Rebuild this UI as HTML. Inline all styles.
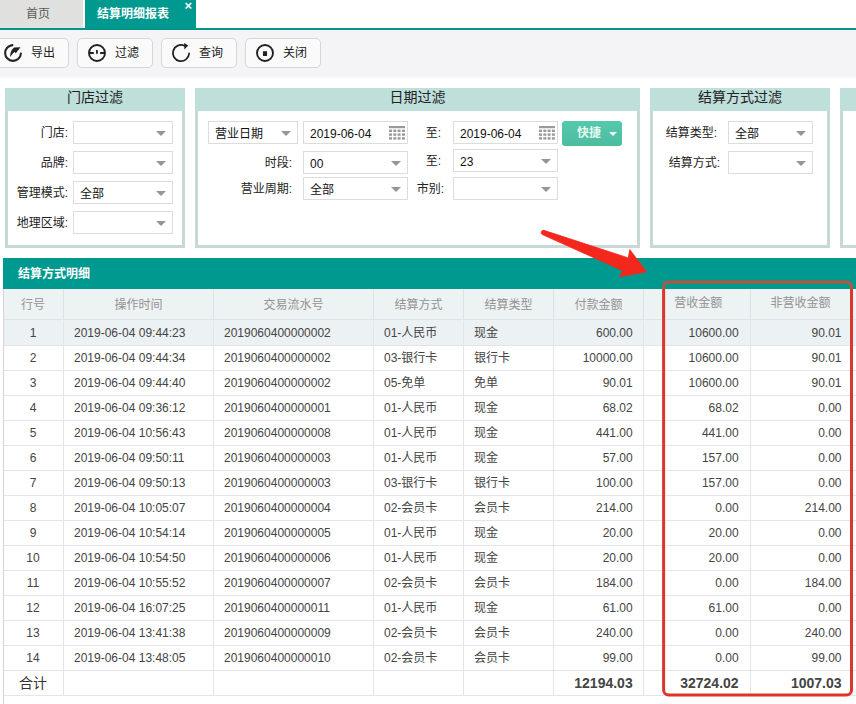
<!DOCTYPE html>
<html lang="zh-CN"><head><meta charset="utf-8"><title>结算明细报表</title>
<style>
*{box-sizing:border-box;margin:0;padding:0}
html,body{width:856px;height:704px;overflow:hidden;background:#fff}
body{position:relative;font-family:"Liberation Sans","Noto Sans CJK SC",sans-serif;font-size:12px;color:#222}
.abs{position:absolute}
/* tabs */
.tab1{position:absolute;left:0;top:0;width:83px;height:28px;background:#e0e0de;color:#5a5a5a;line-height:28px;text-align:center;padding-right:7px}
.tab2{position:absolute;left:85px;top:0;width:111px;height:28px;background:#00998f;color:#fff;font-weight:bold;line-height:28px;padding-left:12px}
.tab2 i{position:absolute;right:4px;top:-4px;font-style:normal;font-size:13px;font-weight:bold;line-height:20px}
.tline{position:absolute;left:0;top:28px;width:856px;height:2px;background:#04948a}
.tbar{position:absolute;left:0;top:30px;width:856px;height:49px;background:linear-gradient(#f4f4f6 0,#f4f4f6 46px,#fff 49px)}
.btn{position:absolute;top:38px;height:30px;width:76px;border:1px solid #d6d6d6;border-radius:5px;background:#fafafa;color:#222;line-height:28px}
.btn span{position:absolute;top:0}
.btn svg{position:absolute}
/* panels */
.panel{position:absolute;top:88px;height:160px;border:3px solid #c6d9d6;background:#fff}
.panel .ph{position:absolute;left:-3px;right:-3px;top:-3px;height:23px;background:#bfdfdb;text-align:center;font-size:14px;line-height:19px;color:#222}
.lab{position:absolute;height:23px;line-height:25px;text-align:right;white-space:nowrap;color:#222}
.sel{position:absolute;height:23px;border:1px solid #dcdcdc;background:#fff;line-height:24px;padding-left:6px;white-space:nowrap;color:#111}
.sel:after{content:"";position:absolute;right:6px;top:9px;border-left:5px solid transparent;border-right:5px solid transparent;border-top:5px solid #969696}
.sel.date:after{display:none}
.sel.date svg{position:absolute;right:2.5px;top:4px}
.qbtn{position:absolute;background:linear-gradient(#55c9ad,#4dbc9f);border-radius:3px;color:#e6f7f1;font-weight:bold;line-height:25px;padding-left:15px}
.qbtn:after{content:"";position:absolute;right:5.5px;top:10.5px;border-left:4px solid transparent;border-right:4px solid transparent;border-top:4.5px solid #f2fbf8}
/* grid */
.grid{position:absolute;left:3px;top:258px;width:853px;height:446px;background:#fff}
.gtitle{position:absolute;left:0;top:0;width:853px;height:31px;background:#00998f;color:#fff;font-weight:bold;line-height:33px;padding-left:15px}
.ghead{position:absolute;left:0;top:31px;width:853px;height:31px;background:#edf2f3;border-bottom:1px solid #dfe3e6}
.hc{position:absolute;top:0;height:30px;line-height:32px;text-align:center;color:#939393;border-right:1px solid #dde2e5}
.gr{position:absolute;left:0;width:853px;height:25px;border-bottom:1px solid #e4e4ea}
.gr.on{background:#ecf1f3}
.c{position:absolute;top:0;height:24px;line-height:24px;border-right:1px solid #e4e4ea;white-space:nowrap;color:#444}
.c.ac{text-align:center}
.c.al{padding-left:10px}
.c.ar{text-align:right;padding-right:10px}
.c.at{text-align:center;font-size:14px;color:#333}
.gr.tot .c{font-weight:bold;font-size:14px}
.gr.tot .c.at{font-weight:normal}

.c.p5{padding-right:10.3px}
.c.p7{padding-right:11.4px}
.c.p8{padding-right:10.5px}
.hc.h7{padding-right:17.4px;line-height:29px}
.hc.h8{padding-right:1.8px;line-height:29px}
.gr.on{top:62px !important;height:26px;padding-top:1px}
.gr.on .c{top:1px}
.gl{position:absolute;left:0;top:31px;width:1px;height:415px;background:#d4d4da;z-index:3}

</style></head><body>
<div class="tab1">首页</div>
<div class="tab2">结算明细报表<i>×</i></div>
<div class="tline"></div>
<div class="tbar"></div>
<div class="btn" style="left:-7px"><svg style="left:7.9px;top:2.85px" width="22" height="22" viewBox="0 0 22 22"><path d="M10.4 3.12 A7.9 7.9 0 1 0 18.9 11.5" fill="none" stroke="#222" stroke-width="2.1" stroke-linecap="round"/><path d="M8.1 14.9 C8 10.6 9.4 7.4 12.1 5.4 L18.5 5.2 L13.6 11.6 L12.9 9.7 C11.1 10.9 9.7 12.7 8.1 15.1Z" fill="#222"/></svg><span style="left:37px">导出</span></div>
<div class="btn" style="left:77px"><svg style="left:8px;top:2.85px" width="22" height="22" viewBox="0 0 22 22"><circle cx="11" cy="11" r="8" fill="none" stroke="#222" stroke-width="1.9"/><path d="M3 11 H7.8 M14.1 11 H19 M10.9 8.05 V11.8" fill="none" stroke="#222" stroke-width="1.8"/></svg><span style="left:37px">过滤</span></div>
<div class="btn" style="left:161px"><svg style="left:8px;top:2.95px" width="22" height="22" viewBox="0 0 22 22"><path d="M14.4 3.7 A8.1 8.1 0 1 0 19.1 11.5" fill="none" stroke="#222" stroke-width="1.8" stroke-linecap="round"/><path d="M14.1 0.9 L18.2 3.55 L14.4 7.6 Z" fill="#222"/></svg><span style="left:37px">查询</span></div>
<div class="btn" style="left:245px"><svg style="left:8px;top:2.85px" width="22" height="22" viewBox="0 0 22 22"><circle cx="11" cy="11" r="8" fill="none" stroke="#222" stroke-width="1.9"/><rect x="8.95" y="9.2" width="4.1" height="4.8" fill="#222"/></svg><span style="left:37px">关闭</span></div>

<div class="panel" style="left:5px;width:180px"><div class="ph">门店过滤</div></div>
<div class="lab" style="left:8px;top:121px;width:60px">门店:</div><div class="sel" style="left:73px;top:121px;width:100px"></div>
<div class="lab" style="left:8px;top:151px;width:60px">品牌:</div><div class="sel" style="left:73px;top:151px;width:100px"></div>
<div class="lab" style="left:8px;top:181px;width:60px">管理模式:</div><div class="sel" style="left:73px;top:181px;width:100px">全部</div>
<div class="lab" style="left:8px;top:211px;width:60px">地理区域:</div><div class="sel" style="left:73px;top:211px;width:100px"></div>

<div class="panel" style="left:195px;width:445px"><div class="ph">日期过滤</div></div>
<div class="sel" style="left:208px;top:121px;width:90px">营业日期</div>
<div class="sel date" style="left:303px;top:121px;width:105px">2019-06-04<svg width="16" height="15" viewBox="0 0 16 15"><g fill="#9a9a9a"><rect x="0" y="0" width="16" height="2.2"/><rect x="0" y="3.6" width="3" height="2.4"/><rect x="4.3" y="3.6" width="3" height="2.4"/><rect x="8.6" y="3.6" width="3" height="2.4"/><rect x="12.9" y="3.6" width="3" height="2.4"/><rect x="0" y="7.4" width="3" height="2.4"/><rect x="4.3" y="7.4" width="3" height="2.4"/><rect x="8.6" y="7.4" width="3" height="2.4"/><rect x="12.9" y="7.4" width="3" height="2.4"/><rect x="0" y="11.2" width="3" height="2.4"/><rect x="4.3" y="11.2" width="3" height="2.4"/><rect x="8.6" y="11.2" width="3" height="2.4"/><rect x="12.9" y="11.2" width="3" height="2.4"/></g></svg></div>
<div class="lab" style="left:400px;top:121px;width:41px">至:</div>
<div class="sel date" style="left:453px;top:121px;width:105px">2019-06-04<svg width="16" height="15" viewBox="0 0 16 15"><g fill="#9a9a9a"><rect x="0" y="0" width="16" height="2.2"/><rect x="0" y="3.6" width="3" height="2.4"/><rect x="4.3" y="3.6" width="3" height="2.4"/><rect x="8.6" y="3.6" width="3" height="2.4"/><rect x="12.9" y="3.6" width="3" height="2.4"/><rect x="0" y="7.4" width="3" height="2.4"/><rect x="4.3" y="7.4" width="3" height="2.4"/><rect x="8.6" y="7.4" width="3" height="2.4"/><rect x="12.9" y="7.4" width="3" height="2.4"/><rect x="0" y="11.2" width="3" height="2.4"/><rect x="4.3" y="11.2" width="3" height="2.4"/><rect x="8.6" y="11.2" width="3" height="2.4"/><rect x="12.9" y="11.2" width="3" height="2.4"/></g></svg></div>
<div class="qbtn" style="left:562px;top:121px;width:60px;height:25px">快捷</div>
<div class="lab" style="left:230px;top:151px;width:62px">时段:</div><div class="sel" style="left:303px;top:151px;width:105px">00</div>
<div class="lab" style="left:400px;top:149px;width:41px">至:</div><div class="sel" style="left:453px;top:149px;width:105px">23</div>
<div class="lab" style="left:230px;top:177px;width:62px">营业周期:</div><div class="sel" style="left:303px;top:177px;width:105px">全部</div>
<div class="lab" style="left:400px;top:177px;width:44px">市别:</div><div class="sel" style="left:453px;top:177px;width:105px"></div>

<div class="panel" style="left:650px;width:180px"><div class="ph">结算方式过滤</div></div>
<div class="lab" style="left:655px;top:121px;width:62px">结算类型:</div><div class="sel" style="left:728px;top:121px;width:85px">全部</div>
<div class="lab" style="left:655px;top:151px;width:65px">结算方式:</div><div class="sel" style="left:728px;top:151px;width:85px"></div>

<div class="panel" style="left:840px;width:40px"><div class="ph"></div></div>
<div class="grid">
<div class="gtitle">结算方式明细</div>
<div class="ghead"><div class="hc h0" style="left:0px;width:61px">行号</div><div class="hc h1" style="left:61px;width:150px">操作时间</div><div class="hc h2" style="left:211px;width:160px">交易流水号</div><div class="hc h3" style="left:371px;width:90px">结算方式</div><div class="hc h4" style="left:461px;width:90px">结算类型</div><div class="hc h5" style="left:551px;width:90px">付款金额</div><div class="hc h6" style="left:641px;width:20px"></div><div class="hc h7" style="left:661px;width:87px">营收金额</div><div class="hc h8" style="left:748px;width:102px">非营收金额</div></div>
<div class="gr on" style="top:63px"><div class="c ac" style="left:0px;width:61px">1</div><div class="c al" style="left:61px;width:150px">2019-06-04 09:44:23</div><div class="c al" style="left:211px;width:160px">2019060400000002</div><div class="c al" style="left:371px;width:90px">01-人民币</div><div class="c al" style="left:461px;width:90px">现金</div><div class="c ar p5" style="left:551px;width:90px">600.00</div><div class="c al" style="left:641px;width:20px"></div><div class="c ar p7" style="left:661px;width:87px">10600.00</div><div class="c ar p8" style="left:748px;width:102px">90.01</div></div>
<div class="gr" style="top:88px"><div class="c ac" style="left:0px;width:61px">2</div><div class="c al" style="left:61px;width:150px">2019-06-04 09:44:34</div><div class="c al" style="left:211px;width:160px">2019060400000002</div><div class="c al" style="left:371px;width:90px">03-银行卡</div><div class="c al" style="left:461px;width:90px">银行卡</div><div class="c ar p5" style="left:551px;width:90px">10000.00</div><div class="c al" style="left:641px;width:20px"></div><div class="c ar p7" style="left:661px;width:87px">10600.00</div><div class="c ar p8" style="left:748px;width:102px">90.01</div></div>
<div class="gr" style="top:113px"><div class="c ac" style="left:0px;width:61px">3</div><div class="c al" style="left:61px;width:150px">2019-06-04 09:44:40</div><div class="c al" style="left:211px;width:160px">2019060400000002</div><div class="c al" style="left:371px;width:90px">05-免单</div><div class="c al" style="left:461px;width:90px">免单</div><div class="c ar p5" style="left:551px;width:90px">90.01</div><div class="c al" style="left:641px;width:20px"></div><div class="c ar p7" style="left:661px;width:87px">10600.00</div><div class="c ar p8" style="left:748px;width:102px">90.01</div></div>
<div class="gr" style="top:138px"><div class="c ac" style="left:0px;width:61px">4</div><div class="c al" style="left:61px;width:150px">2019-06-04 09:36:12</div><div class="c al" style="left:211px;width:160px">2019060400000001</div><div class="c al" style="left:371px;width:90px">01-人民币</div><div class="c al" style="left:461px;width:90px">现金</div><div class="c ar p5" style="left:551px;width:90px">68.02</div><div class="c al" style="left:641px;width:20px"></div><div class="c ar p7" style="left:661px;width:87px">68.02</div><div class="c ar p8" style="left:748px;width:102px">0.00</div></div>
<div class="gr" style="top:163px"><div class="c ac" style="left:0px;width:61px">5</div><div class="c al" style="left:61px;width:150px">2019-06-04 10:56:43</div><div class="c al" style="left:211px;width:160px">2019060400000008</div><div class="c al" style="left:371px;width:90px">01-人民币</div><div class="c al" style="left:461px;width:90px">现金</div><div class="c ar p5" style="left:551px;width:90px">441.00</div><div class="c al" style="left:641px;width:20px"></div><div class="c ar p7" style="left:661px;width:87px">441.00</div><div class="c ar p8" style="left:748px;width:102px">0.00</div></div>
<div class="gr" style="top:188px"><div class="c ac" style="left:0px;width:61px">6</div><div class="c al" style="left:61px;width:150px">2019-06-04 09:50:11</div><div class="c al" style="left:211px;width:160px">2019060400000003</div><div class="c al" style="left:371px;width:90px">01-人民币</div><div class="c al" style="left:461px;width:90px">现金</div><div class="c ar p5" style="left:551px;width:90px">57.00</div><div class="c al" style="left:641px;width:20px"></div><div class="c ar p7" style="left:661px;width:87px">157.00</div><div class="c ar p8" style="left:748px;width:102px">0.00</div></div>
<div class="gr" style="top:213px"><div class="c ac" style="left:0px;width:61px">7</div><div class="c al" style="left:61px;width:150px">2019-06-04 09:50:13</div><div class="c al" style="left:211px;width:160px">2019060400000003</div><div class="c al" style="left:371px;width:90px">03-银行卡</div><div class="c al" style="left:461px;width:90px">银行卡</div><div class="c ar p5" style="left:551px;width:90px">100.00</div><div class="c al" style="left:641px;width:20px"></div><div class="c ar p7" style="left:661px;width:87px">157.00</div><div class="c ar p8" style="left:748px;width:102px">0.00</div></div>
<div class="gr" style="top:238px"><div class="c ac" style="left:0px;width:61px">8</div><div class="c al" style="left:61px;width:150px">2019-06-04 10:05:07</div><div class="c al" style="left:211px;width:160px">2019060400000004</div><div class="c al" style="left:371px;width:90px">02-会员卡</div><div class="c al" style="left:461px;width:90px">会员卡</div><div class="c ar p5" style="left:551px;width:90px">214.00</div><div class="c al" style="left:641px;width:20px"></div><div class="c ar p7" style="left:661px;width:87px">0.00</div><div class="c ar p8" style="left:748px;width:102px">214.00</div></div>
<div class="gr" style="top:263px"><div class="c ac" style="left:0px;width:61px">9</div><div class="c al" style="left:61px;width:150px">2019-06-04 10:54:14</div><div class="c al" style="left:211px;width:160px">2019060400000005</div><div class="c al" style="left:371px;width:90px">01-人民币</div><div class="c al" style="left:461px;width:90px">现金</div><div class="c ar p5" style="left:551px;width:90px">20.00</div><div class="c al" style="left:641px;width:20px"></div><div class="c ar p7" style="left:661px;width:87px">20.00</div><div class="c ar p8" style="left:748px;width:102px">0.00</div></div>
<div class="gr" style="top:288px"><div class="c ac" style="left:0px;width:61px">10</div><div class="c al" style="left:61px;width:150px">2019-06-04 10:54:50</div><div class="c al" style="left:211px;width:160px">2019060400000006</div><div class="c al" style="left:371px;width:90px">01-人民币</div><div class="c al" style="left:461px;width:90px">现金</div><div class="c ar p5" style="left:551px;width:90px">20.00</div><div class="c al" style="left:641px;width:20px"></div><div class="c ar p7" style="left:661px;width:87px">20.00</div><div class="c ar p8" style="left:748px;width:102px">0.00</div></div>
<div class="gr" style="top:313px"><div class="c ac" style="left:0px;width:61px">11</div><div class="c al" style="left:61px;width:150px">2019-06-04 10:55:52</div><div class="c al" style="left:211px;width:160px">2019060400000007</div><div class="c al" style="left:371px;width:90px">02-会员卡</div><div class="c al" style="left:461px;width:90px">会员卡</div><div class="c ar p5" style="left:551px;width:90px">184.00</div><div class="c al" style="left:641px;width:20px"></div><div class="c ar p7" style="left:661px;width:87px">0.00</div><div class="c ar p8" style="left:748px;width:102px">184.00</div></div>
<div class="gr" style="top:338px"><div class="c ac" style="left:0px;width:61px">12</div><div class="c al" style="left:61px;width:150px">2019-06-04 16:07:25</div><div class="c al" style="left:211px;width:160px">2019060400000011</div><div class="c al" style="left:371px;width:90px">01-人民币</div><div class="c al" style="left:461px;width:90px">现金</div><div class="c ar p5" style="left:551px;width:90px">61.00</div><div class="c al" style="left:641px;width:20px"></div><div class="c ar p7" style="left:661px;width:87px">61.00</div><div class="c ar p8" style="left:748px;width:102px">0.00</div></div>
<div class="gr" style="top:363px"><div class="c ac" style="left:0px;width:61px">13</div><div class="c al" style="left:61px;width:150px">2019-06-04 13:41:38</div><div class="c al" style="left:211px;width:160px">2019060400000009</div><div class="c al" style="left:371px;width:90px">02-会员卡</div><div class="c al" style="left:461px;width:90px">会员卡</div><div class="c ar p5" style="left:551px;width:90px">240.00</div><div class="c al" style="left:641px;width:20px"></div><div class="c ar p7" style="left:661px;width:87px">0.00</div><div class="c ar p8" style="left:748px;width:102px">240.00</div></div>
<div class="gr" style="top:388px"><div class="c ac" style="left:0px;width:61px">14</div><div class="c al" style="left:61px;width:150px">2019-06-04 13:48:05</div><div class="c al" style="left:211px;width:160px">2019060400000010</div><div class="c al" style="left:371px;width:90px">02-会员卡</div><div class="c al" style="left:461px;width:90px">会员卡</div><div class="c ar p5" style="left:551px;width:90px">99.00</div><div class="c al" style="left:641px;width:20px"></div><div class="c ar p7" style="left:661px;width:87px">0.00</div><div class="c ar p8" style="left:748px;width:102px">99.00</div></div>
<div class="gr tot" style="top:413px"><div class="c at" style="left:0px;width:61px">合计</div><div class="c al" style="left:61px;width:150px"></div><div class="c al" style="left:211px;width:160px"></div><div class="c al" style="left:371px;width:90px"></div><div class="c al" style="left:461px;width:90px"></div><div class="c ar p5" style="left:551px;width:90px">12194.03</div><div class="c al" style="left:641px;width:20px"></div><div class="c ar p7" style="left:661px;width:87px">32724.02</div><div class="c ar p8" style="left:748px;width:102px">1007.03</div></div>
<div class="gl"></div></div>
<svg class="abs" style="left:0;top:0" width="856" height="704" viewBox="0 0 856 704">
<defs><clipPath id="ca"><rect x="650" y="270" width="206" height="19"/></clipPath><clipPath id="cb"><rect x="650" y="289" width="206" height="415"/></clipPath></defs>
<rect x="663.6" y="282" width="187.9" height="413" rx="5" ry="5" fill="none" stroke="#b6553d" stroke-width="3.2" clip-path="url(#ca)"/>
<rect x="663.6" y="282" width="187.9" height="413" rx="5" ry="5" fill="none" stroke="#dc3529" stroke-width="3" clip-path="url(#cb)"/>
<path d="M543.8 230.3 L628.3 257.9 L629.8 249.6 L646.6 271.8 L619.4 276.8 L623 270.8 L542.4 234.6 A2.3 2.3 0 0 1 543.8 230.3 Z" fill="#f3271c" stroke="#f3271c" stroke-width="0.8" stroke-linejoin="round"/>
</svg>
</body></html>
